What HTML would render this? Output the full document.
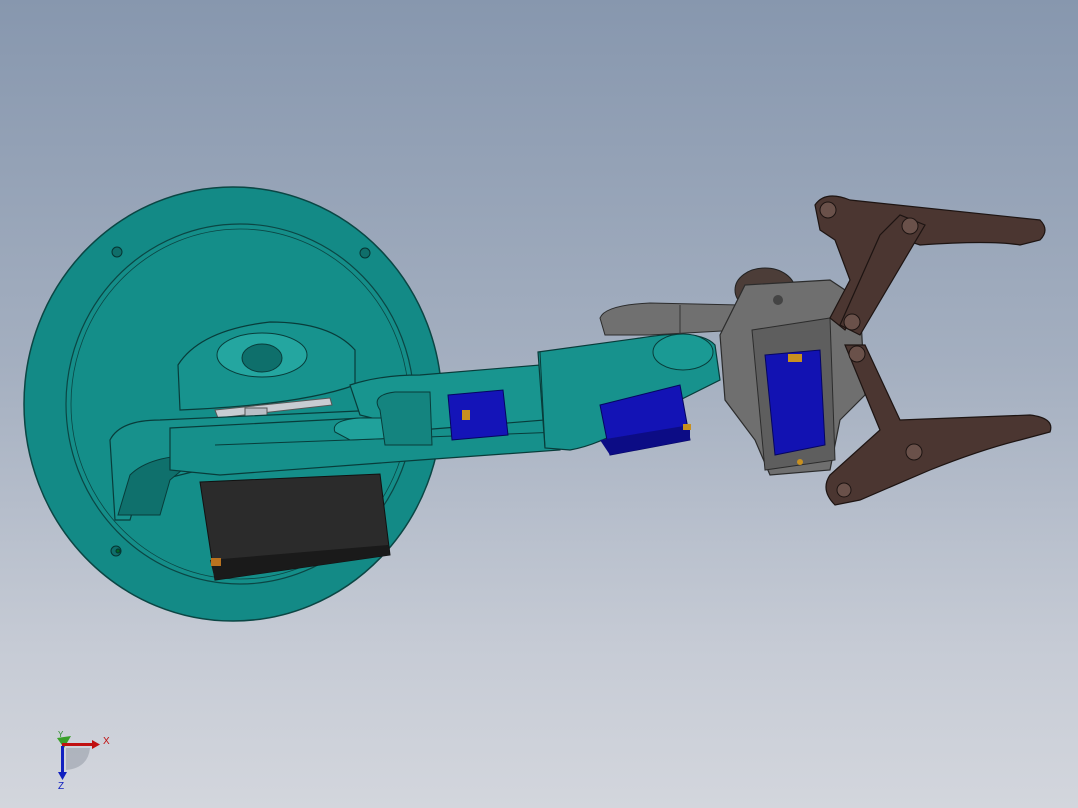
<!DOCTYPE html>
<html><head><meta charset="utf-8"><style>
html,body{margin:0;padding:0;width:1078px;height:808px;overflow:hidden}
body{background:linear-gradient(to bottom,#8797ae 0%,#a4afc0 45%,#c6cbd5 80%,#d3d6dd 100%);font-family:"Liberation Sans",sans-serif}
svg{position:absolute;left:0;top:0}
</style></head><body>
<svg width="1078" height="808" viewBox="0 0 1078 808">
<!-- base disk -->
<ellipse cx="233" cy="404" rx="209" ry="217" fill="#138a86" stroke="#0b4644" stroke-width="1.5"/>
<ellipse cx="240" cy="404" rx="174" ry="180" fill="#148e89" stroke="#0b4644" stroke-width="1.2"/>
<ellipse cx="240" cy="404" rx="169" ry="175" fill="none" stroke="#0b4644" stroke-width="0.8"/>
<g fill="#0f6e6a" stroke="#063331" stroke-width="1"><circle cx="117" cy="252" r="5"/><circle cx="365" cy="253" r="5"/><circle cx="116" cy="551" r="5"/><circle cx="118" cy="551" r="2" fill="#062"/></g>
<!-- upper cam part -->
<path d="M178 365 Q200 330 270 322 Q330 322 355 350 L355 385 Q300 405 180 410 Z" fill="#17938e" stroke="#083c3a" stroke-width="1.2"/>
<ellipse cx="262" cy="355" rx="45" ry="22" fill="#24a6a0" stroke="#083c3a"/>
<ellipse cx="262" cy="358" rx="20" ry="14" fill="#0e6f6b" stroke="#083c3a"/>
<path d="M215 410 L330 398 L332 405 L218 418 Z" fill="#c8ccd2" stroke="#555"/>
<rect x="245" y="408" width="22" height="20" fill="#b9bec6" stroke="#555"/>
<!-- black servo -->
<path d="M200 482 L380 474 L390 555 L215 580 Z" fill="#2b2b2b" stroke="#111"/>
<path d="M210 560 L388 545 L390 555 L215 580 Z" fill="#1a1a1a"/>
<rect x="211" y="558" width="10" height="8" fill="#b9721f"/>
<!-- main arm -->
<path d="M110 440 Q120 420 160 420 L380 410 L380 445 L200 470 L140 485 L130 520 L115 520 Z" fill="#17918c" stroke="#083c3a" stroke-width="1.2"/>
<path d="M118 515 L130 475 Q150 455 200 455 L170 480 L160 515 Z" fill="#0f706c" stroke="#083c3a"/>
<path d="M170 428 L420 415 L560 405 L560 450 L420 460 L220 475 L170 470 Z" fill="#16908b" stroke="#083c3a" stroke-width="1.2"/>
<path d="M215 445 L560 432" stroke="#083c3a" fill="none"/>
<path d="M350 385 Q380 375 420 375 L540 365 L545 420 L420 430 L360 415 Z" fill="#18958f" stroke="#083c3a" stroke-width="1.2"/>
<path d="M335 432 Q330 420 360 418 L400 418 Q410 428 400 438 L350 440 Z" fill="#20a19b" stroke="#083c3a"/>
<path d="M380 410 Q370 395 395 392 L430 392 L432 445 L385 445 Z" fill="#14847f" stroke="#083c3a"/>
<!-- blue servo 1 -->
<path d="M448 395 L503 390 L508 435 L452 440 Z" fill="#1414b8" stroke="#050560"/>
<rect x="462" y="410" width="8" height="10" fill="#c89020"/>
<!-- forearm -->
<path d="M538 352 L640 338 Q700 328 715 345 L720 380 Q680 400 640 420 Q600 445 570 450 L545 448 Z" fill="#17928d" stroke="#083c3a" stroke-width="1.2"/>
<path d="M540 352 L545 448" stroke="#083c3a"/>
<ellipse cx="683" cy="352" rx="30" ry="18" fill="#1a9a94" stroke="#083c3a"/>
<!-- blue servo 2 -->
<path d="M600 405 L680 385 L690 440 L610 455 Z" fill="#1313b5" stroke="#050560"/>
<path d="M600 440 L690 425 L690 440 L610 455 Z" fill="#0c0c85"/>
<rect x="683" y="424" width="8" height="6" fill="#c89020"/>
<!-- gray handle -->
<path d="M600 318 Q605 305 650 303 L740 305 Q748 318 740 330 L650 335 L605 335 Z" fill="#707070" stroke="#2c2c2c"/>
<path d="M680 305 L680 333" stroke="#333"/>
<!-- gripper gray body -->
<ellipse cx="765" cy="290" rx="30" ry="22" fill="#4c3d38" stroke="#222"/>
<path d="M745 285 L830 280 L860 300 L865 395 L840 420 L830 470 L770 475 L755 440 L725 400 L720 335 Z" fill="#6f6f6f" stroke="#2c2c2c" stroke-width="1.2"/>
<path d="M752 330 L830 318 L835 460 L765 470 Z" fill="#5e5e5e" stroke="#2c2c2c"/>
<path d="M765 355 L820 350 L825 445 L775 455 Z" fill="#1212b2" stroke="#050560"/>
<rect x="788" y="354" width="14" height="8" fill="#c89020"/>
<circle cx="778" cy="300" r="5" fill="#444"/>
<circle cx="800" cy="462" r="3" fill="#c89020"/>
<!-- brown fingers -->
<g fill="#4b3631" stroke="#1d1412" stroke-width="1.2">
<path d="M815 205 Q825 190 850 200 L1040 220 Q1050 230 1040 240 L1020 245 Q990 240 920 245 L905 240 L855 310 L845 330 L830 318 L850 280 L835 240 L820 230 Z"/>
<path d="M880 235 L900 215 L925 225 L860 335 L840 325 Z"/>
<path d="M845 345 L865 345 L900 420 L1030 415 Q1055 418 1050 432 L1020 440 Q980 450 930 470 L860 500 L835 505 Q820 490 830 475 L880 430 Z"/>
</g>
<g fill="#6a514a" stroke="#1d1412"><circle cx="828" cy="210" r="8"/><circle cx="910" cy="226" r="8"/><circle cx="852" cy="322" r="8"/><circle cx="857" cy="354" r="8"/><circle cx="914" cy="452" r="8"/><circle cx="844" cy="490" r="7"/></g>
<!-- axis triad -->
<polygon points="57,738 71,736 64,748" fill="#3aa02a"/>
<rect x="62" y="743" width="30" height="3" fill="#c01010"/>
<polygon points="92,740 100,744.5 92,749" fill="#c01010"/>
<rect x="61" y="746" width="3" height="28" fill="#1020c0"/>
<polygon points="58,772 67,772 62.5,780" fill="#1020c0"/>
<path d="M66 748 L90 748 Q88 768 66 770 Z" fill="#9aa0aa" opacity="0.6"/>
<text x="103" y="744" font-size="10" fill="#c01010">X</text>
<text x="58" y="789" font-size="10" fill="#1020c0">Z</text>
<text x="58" y="737" font-size="8" fill="#2a8a2a">Y</text>
</svg>
</body></html>
